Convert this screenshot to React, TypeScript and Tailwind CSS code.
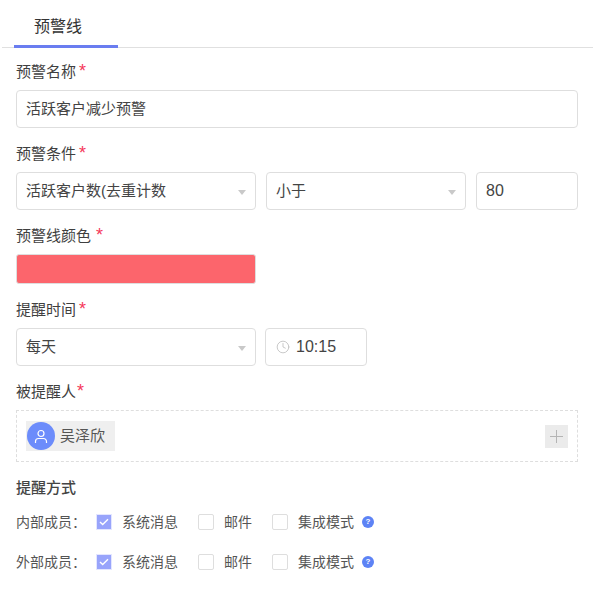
import React from 'react';
import { Clock } from 'lucide-react';

function Label({ text, gap = 'ml-[3px]' }: { text: string; gap?: string }) {
  return (
    <div className="flex h-5 items-center pt-[2px] text-[15px] leading-5 text-[#3f3f3f]">
      <span>{text}</span>
      <span className={`${gap} -mt-[3px] text-[18px] leading-none text-[#f5385a]`}>*</span>
    </div>
  );
}

function Select({ value, width }: { value: string; width: string }) {
  return (
    <div className={`${width} flex h-[38px] items-center justify-between rounded border border-[#dedede] pl-[9px] pr-[9px] text-[15px] text-[#444]`}>
      <span>{value}</span>
      <span className="mt-[2px] h-0 w-0 border-x-[4px] border-t-[5px] border-x-transparent border-t-[#c9c9c9]"></span>
    </div>
  );
}

function Check({ label, checked }: { label: string; checked?: boolean }) {
  return (
    <div className="flex items-center">
      {checked ? (
        <span className="flex h-4 w-4 items-center justify-center border border-[#e3e6ff] bg-[#98a4fb]">
          <svg width="10" height="8" viewBox="0 0 10 8" fill="none">
            <path d="M1 4l2.7 2.6L9 1.2" stroke="#fff" strokeWidth="1.4" />
          </svg>
        </span>
      ) : (
        <span className="h-4 w-4 rounded-[2px] border border-[#dedede] bg-white"></span>
      )}
      <span className="ml-[10px] pt-[1px] text-[14px] text-[#555]">{label}</span>
    </div>
  );
}

function Help() {
  return (
    <span className="ml-2 flex h-3 w-3 items-center justify-center rounded-full bg-[#5d83f5] text-[8px] font-bold leading-none text-white">
      ?
    </span>
  );
}

function NotifyRow({ label }: { label: string }) {
  return (
    <div className="flex h-5 items-center">
      <span className="w-[80px] pt-[1px] text-[14px] text-[#555]">{label}</span>
      <div className="w-[102px]"><Check label="系统消息" checked /></div>
      <div className="w-[74px]"><Check label="邮件" /></div>
      <Check label="集成模式" />
      <Help />
    </div>
  );
}

export default function App() {
  return (
    <div
      className="h-[590px] w-[595px] overflow-hidden bg-white"
      style={{ fontFamily: '"Liberation Sans", "Noto Sans CJK SC", sans-serif' }}
    >
      {/* Tab bar */}
      <div className="mx-[2px] flex h-[48px] border-b border-[#e0e0e0]">
        <div className="ml-3 h-[48px] w-[104px] border-b-[3px] border-[#6a7df0] pt-[17px] pl-[20px] text-[16px] leading-5 text-[#333]">
          预警线
        </div>
      </div>

      <div className="px-4 pt-[13px]">
        <Label text="预警名称" />
        <div className="mt-[9px] flex h-[38px] w-[562px] items-center rounded border border-[#dedede] pl-[9px] text-[15px] text-[#444]">
          活跃客户减少预警
        </div>

        <div className="mt-[15px]"><Label text="预警条件" /></div>
        <div className="mt-[9px] flex gap-[10px]">
          <Select value="活跃客户数(去重计数" width="w-[240px]" />
          <Select value="小于" width="w-[200px]" />
          <div className="flex h-[38px] w-[102px] items-center rounded border border-[#dedede] pl-[9px] text-[16px] text-[#444]">
            80
          </div>
        </div>

        <div className="mt-[15px]"><Label text="预警线颜色" gap="ml-[5px]" /></div>
        <div className="mt-[9px] h-[30px] w-[240px] rounded-[3px] border border-[#dedede] bg-[#fc656c]"></div>

        <div className="mt-[15px]"><Label text="提醒时间" /></div>
        <div className="mt-[9px] flex gap-[9px]">
          <Select value="每天" width="w-[240px]" />
          <div className="flex h-[38px] w-[102px] items-center rounded border border-[#dedede] pl-[10px] text-[16px] text-[#444]">
            <Clock size={14} strokeWidth={1.4} className="text-[#bdbdbd]" />
            <span className="ml-[6px]">10:15</span>
          </div>
        </div>

        <div className="mt-[15px]"><Label text="被提醒人" gap="ml-[1px]" /></div>
        <div className="mt-[9px] flex h-[52px] w-[562px] items-center justify-between border border-dashed border-[#dedede] pl-[9px] pr-[9px]">
          <div className="flex h-[30px] w-[89px] items-center bg-[#efefef] pl-[1px]">
            <span className="flex h-[28px] w-[28px] items-center justify-center rounded-full bg-[#6c8cfb]">
              <svg width="14" height="15" viewBox="0 0 14 15" fill="none" stroke="#fff" strokeWidth="1.2">
                <circle cx="7" cy="4.5" r="3" />
                <path d="M1.5 14v-1.5a3 3 0 0 1 3-3h5a3 3 0 0 1 3 3V14" />
              </svg>
            </span>
            <span className="ml-[5px] text-[15px] text-[#555]">吴泽欣</span>
          </div>
          <div className="flex h-[23px] w-[23px] items-center justify-center bg-[#ebebeb]">
            <svg width="15" height="15" viewBox="0 0 15 15" stroke="#b4b4b4" strokeWidth="1">
              <path d="M7.5 1v13M1 7.5h13" />
            </svg>
          </div>
        </div>

        <div className="mt-4 h-5 text-[15px] leading-5 font-medium text-[#444]">提醒方式</div>
        <div className="mt-[14px]"><NotifyRow label="内部成员：" /></div>
        <div className="mt-5"><NotifyRow label="外部成员：" /></div>
      </div>
    </div>
  );
}
